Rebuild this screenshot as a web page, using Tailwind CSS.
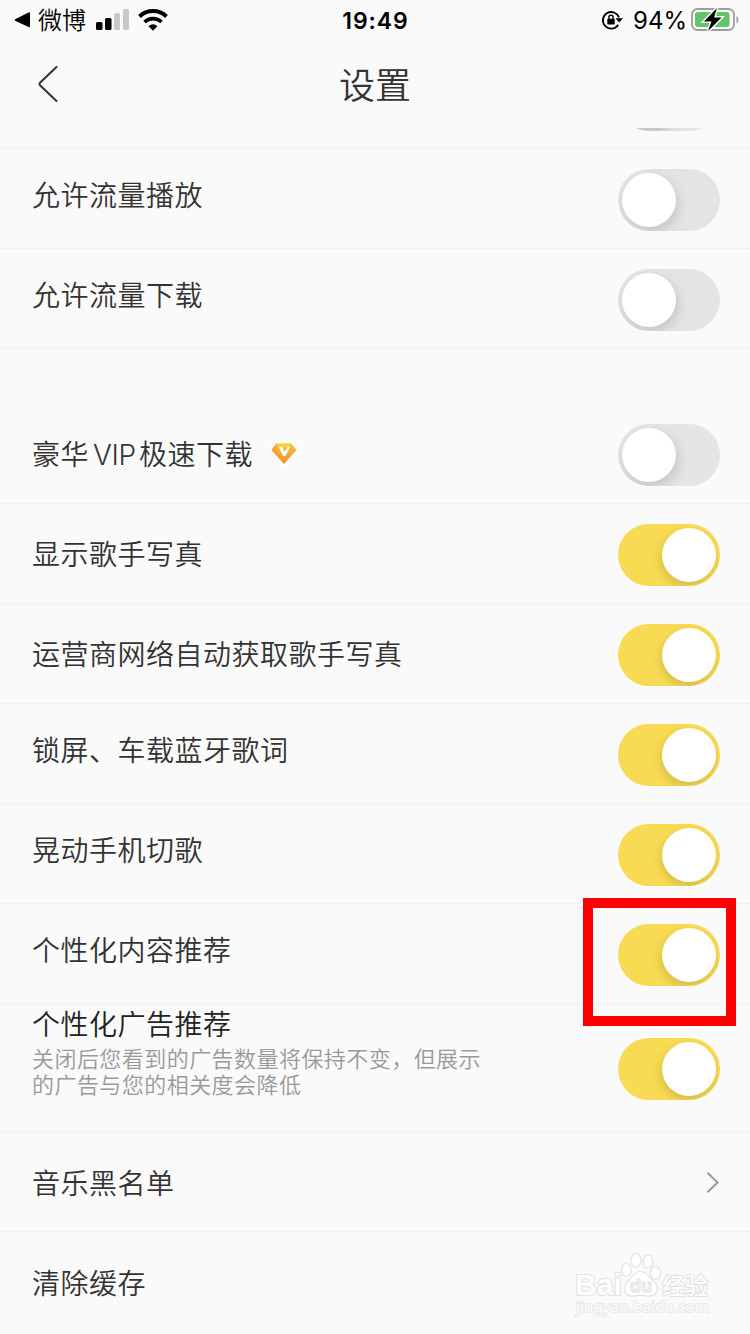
<!doctype html>
<html lang="zh-CN">
<head>
  <meta charset="UTF-8">
  <meta name="viewport" content="width=device-width, initial-scale=1.0">
  <title>设置</title>
  <script src="https://cdn.jsdelivr.net/npm/@tailwindcss/browser@4"></script>
  <style>
    body {
      font-family: Inter, 'Noto Sans CJK SC', sans-serif;
    }
  </style>
</head>
<body class="relative w-[750px] h-[1334px] overflow-hidden bg-[#fafafa] text-[#333]">
  <!-- status bar -->
  <div class="grid grid-cols-3 h-10 pl-[14px] pr-[11px] items-center text-black">
    <div class="flex items-center">
      <svg class="w-4 h-4" viewBox="0 0 16 16"><path d="M1.2 7.2 14.5.4Q16 0 16 1.5V14Q16 15.500 14.500 15L1.200 8.800Q0 8 1.200 7.200Z"/></svg>
      <span class="ml-2 pt-[2px] text-[24px] leading-[38px] font-[350]">微博</span>
      <svg class="ml-[10px] w-[34px] h-[22px]" viewBox="0 0 34 22">
        <rect x="0" y="13" width="6.500" height="8" rx="1.500"/>
        <rect x="9" y="9" width="6.500" height="12" rx="1.500"/>
        <rect x="18" y="4" width="6" height="17" rx="1.500" fill="#c8c8c8"/>
        <rect x="27" y="0" width="6" height="21" rx="1.500" fill="#c8c8c8"/>
      </svg>
      <svg class="ml-2 w-[30px] h-[22px]" viewBox="0 0 30 22">
        <path d="M1.500 7.500A19.500 19.500 0 0 1 28.500 7.500" fill="none" stroke="#000" stroke-width="4"/>
        <path d="M6.500 13A12.500 12.500 0 0 1 23.500 13" fill="none" stroke="#000" stroke-width="3.600"/>
        <path d="M10.500 17.200Q15 13.500 19.500 17.200L15 21.700Z"/>
      </svg>
    </div>
    <div class="pt-[2px] pr-[2px] text-center text-[23px] leading-[38px] font-semibold tracking-[0.9px]">19:49</div>
    <div class="flex items-center justify-end">
      <svg class="w-[22px] h-[20px]" viewBox="0 0 22 20">
        <path d="M18 7.500A8.300 8.300 0 1 0 17.200 14.800" fill="none" stroke="#000" stroke-width="1.800"/>
        <path d="M14.500 8.200H22L18.200 12.600Z"/>
        <rect x="6.300" y="8.800" width="7.400" height="5.700" rx="1"/>
        <path d="M7.900 9V7.300a2.100 2.100 0 0 1 4.200 0V9" fill="none" stroke="#000" stroke-width="1.400"/>
      </svg>
      <span class="ml-[10px] pt-[2px] text-[24px] leading-[38px]">94%</span>
      <svg class="ml-[4px] w-[48px] h-[24px]" viewBox="0 0 48 24">
        <rect x="1" y="1" width="42" height="21" rx="5.500" fill="none" stroke="#9d9d9d" stroke-width="1.800"/>
        <path d="M45.500 8v7.500q2-1 2-3.700t-2-3.800z" fill="#9d9d9d"/>
        <rect x="4" y="4" width="34.500" height="15" rx="3" fill="#65c466"/>
        <path d="M26 0 13 13.500h7.500L17 23 30.500 9.500H23Z" stroke="#fafafa" stroke-width="3" paint-order="stroke"/>
      </svg>
    </div>
  </div>

  <!-- nav bar -->
  <header class="grid grid-cols-3 items-center h-[88px] px-[38px]">
    <svg class="w-5 h-9" viewBox="0 0 20 36" fill="none" stroke="#333" stroke-width="2" stroke-linecap="round"><path d="M18.500 1 2 16.800Q1 18 2 19.200L18.500 35"/></svg>
    <h1 class="pt-1 text-center text-[36px] leading-[84px] font-[350]">设置</h1>
  </header>

  <main>
    <!-- row scrolled under the nav bar -->
    <div class="flex h-[21px] items-end justify-end overflow-hidden border-b border-[#f2f2f2] pr-[30px] pb-[17px]">
      <div class="h-[62px] w-[102px] shrink-0 overflow-hidden rounded-full bg-[#e4e4e4] p-1"><div class="size-[54px] rounded-full bg-white shadow-[2px_5px_12px_rgba(0,0,0,0.2)]"></div></div>
    </div>
    <div class="flex h-[100px] items-start justify-between border-b border-[#f2f2f2] pl-8 pr-[30px]">
      <p class="mt-[27px] text-[28px] leading-10 font-[350] tracking-[0.5px]">允许流量播放</p>
      <div class="mt-5 h-[62px] w-[102px] overflow-hidden rounded-full bg-[#e4e4e4] p-1"><div class="size-[54px] rounded-full bg-white shadow-[2px_5px_12px_rgba(0,0,0,0.14)]"></div></div>
    </div>
    <div class="flex h-[100px] items-start justify-between border-b border-[#f2f2f2] pl-8 pr-[30px]">
      <p class="mt-[27px] text-[28px] leading-10 font-[350] tracking-[0.5px]">允许流量下载</p>
      <div class="mt-5 h-[62px] w-[102px] overflow-hidden rounded-full bg-[#e4e4e4] p-1"><div class="size-[54px] rounded-full bg-white shadow-[2px_5px_12px_rgba(0,0,0,0.14)]"></div></div>
    </div>

    <div class="mt-[55px] flex h-[100px] items-start border-b border-[#f2f2f2] pl-8 pr-[30px]">
      <p class="mt-[31px] text-[28px] leading-10 font-[350] tracking-[0.5px]">豪华<span class="ml-[4px] mr-[3px] tracking-[-0.3px]">VIP</span>极速下载</p>
      <svg class="ml-[14px] mt-[35px] h-[30px] w-[34px]" viewBox="0 0 34 30">
        <defs>
          <linearGradient id="gem" x1="0" y1="0" x2="0" y2="1">
            <stop offset="0" stop-color="#f8c63f"/>
            <stop offset="1" stop-color="#ee8b35"/>
          </linearGradient>
        </defs>
        <path d="M8 1H26L33 10 17 29 1 10Z" fill="#fff"/>
        <path d="M9.500 4.500H24.500L29.500 11 17 25 4.500 11Z" fill="url(#gem)"/>
        <path d="M9.500 4.500 4.500 11 17 25 9.500 11Z" fill="#f6a13a"/>
        <path d="M9.500 4.500H24.500L22 8H12Z" fill="#fad24e"/>
        <path d="M12 8H15.500L17.500 13 20.500 8H23L18.500 17H16Z" fill="#fff"/>
      </svg>
      <div class="ml-auto mt-5 h-[62px] w-[102px] overflow-hidden rounded-full bg-[#e4e4e4] p-1"><div class="size-[54px] rounded-full bg-white shadow-[2px_5px_12px_rgba(0,0,0,0.14)]"></div></div>
    </div>
    <div class="flex h-[100px] items-start justify-between border-b border-[#f2f2f2] pl-8 pr-[30px]">
      <p class="mt-[31px] text-[28px] leading-10 font-[350] tracking-[0.5px]">显示歌手写真</p>
      <div class="mt-5 flex h-[62px] w-[102px] justify-end overflow-hidden rounded-full bg-[#f8db52] p-1"><div class="size-[54px] rounded-full bg-white shadow-[-1px_4px_10px_rgba(0,0,0,0.15)]"></div></div>
    </div>
    <div class="flex h-[100px] items-start justify-between border-b border-[#f2f2f2] pl-8 pr-[30px]">
      <p class="mt-[31px] text-[28px] leading-10 font-[350] tracking-[0.5px]">运营商网络自动获取歌手写真</p>
      <div class="mt-5 flex h-[62px] w-[102px] justify-end overflow-hidden rounded-full bg-[#f8db52] p-1"><div class="size-[54px] rounded-full bg-white shadow-[-1px_4px_10px_rgba(0,0,0,0.15)]"></div></div>
    </div>
    <div class="flex h-[100px] items-start justify-between border-b border-[#f2f2f2] pl-8 pr-[30px]">
      <p class="mt-[27px] text-[28px] leading-10 font-[350] tracking-[0.5px]">锁屏、车载蓝牙歌词</p>
      <div class="mt-5 flex h-[62px] w-[102px] justify-end overflow-hidden rounded-full bg-[#f8db52] p-1"><div class="size-[54px] rounded-full bg-white shadow-[-1px_4px_10px_rgba(0,0,0,0.15)]"></div></div>
    </div>
    <div class="flex h-[100px] items-start justify-between border-b border-[#f2f2f2] pl-8 pr-[30px]">
      <p class="mt-[27px] text-[28px] leading-10 font-[350] tracking-[0.5px]">晃动手机切歌</p>
      <div class="mt-5 flex h-[62px] w-[102px] justify-end overflow-hidden rounded-full bg-[#f8db52] p-1"><div class="size-[54px] rounded-full bg-white shadow-[-1px_4px_10px_rgba(0,0,0,0.15)]"></div></div>
    </div>
    <div class="relative flex h-[100px] items-start justify-between border-b border-[#f2f2f2] pl-8 pr-[30px]">
      <p class="mt-[27px] text-[28px] leading-10 font-[350] tracking-[0.5px]">个性化内容推荐</p>
      <div class="mt-5 flex h-[62px] w-[102px] justify-end overflow-hidden rounded-full bg-[#f8db52] p-1"><div class="size-[54px] rounded-full bg-white shadow-[-1px_4px_10px_rgba(0,0,0,0.15)]"></div></div>
      <!-- highlight frame -->
      <div class="absolute -top-[6px] right-[14px] h-[128px] w-[153px] border-10 border-[#ff0000]"></div>
    </div>
    <div class="flex h-[128px] items-start justify-between border-b border-[#f2f2f2] pl-8 pr-[30px]">
      <div>
        <p class="mt-px text-[28px] leading-10 font-[350] tracking-[0.5px] text-[#222]">个性化广告推荐</p>
        <p class="mt-px text-[22px] leading-[26px] font-[350] tracking-[0.45px] text-[#999]">关闭后您看到的广告数量将保持不变，但展示<br>的广告与您的相关度会降低</p>
      </div>
      <div class="mt-[34px] flex h-[62px] w-[102px] justify-end overflow-hidden rounded-full bg-[#f8db52] p-1"><div class="size-[54px] rounded-full bg-white shadow-[-1px_4px_10px_rgba(0,0,0,0.15)]"></div></div>
    </div>
    <div class="flex h-[100px] items-start justify-between border-b border-[#f2f2f2] pl-8 pr-[30px]">
      <p class="mt-8 text-[28px] leading-10 font-[350] tracking-[0.5px]">音乐黑名单</p>
      <svg class="mt-10 h-[21px] w-[14px]" viewBox="0 0 14 21" fill="none" stroke="#999" stroke-width="2"><path d="M1.500.8 11.500 10.500 1.500 20.200"/></svg>
    </div>
    <div class="flex h-[100px] items-start border-b border-[#f2f2f2] pl-8 pr-[30px]">
      <p class="mt-8 text-[28px] leading-10 font-[350] tracking-[0.5px]">清除缓存</p>
    </div>
  </main>

  <!-- watermark -->
  <svg class="absolute left-[570px] top-[1248px] h-[76px] w-[145px]" viewBox="0 0 145 76" fill="#fff" stroke="#e2e2e2" stroke-width="2" stroke-linejoin="round">
    <g stroke-width="1.200">
      <ellipse cx="56.500" cy="22" rx="5" ry="6.500"/>
      <ellipse cx="66" cy="12.500" rx="5" ry="7"/>
      <ellipse cx="78" cy="13.500" rx="5" ry="6.500"/>
      <ellipse cx="85.500" cy="25" rx="5" ry="6.500"/>
      <path d="M70.500 23.500C77 23.500 79 29 83 32.500C88 36.500 89 42 84.500 46.500C80 50 76 47 70.500 47.500C65 47 61 50 56.500 46.500C53 42 54 36.500 58.500 32.500C62.500 29 64.500 23.500 70.500 23.500Z"/>
    </g>
    <g paint-order="stroke">
      <text x="5" y="47" font-family="Liberation Sans" font-weight="700" font-size="29" textLength="47" lengthAdjust="spacingAndGlyphs">Bai</text>
      <text x="60" y="44" font-family="Liberation Sans" font-weight="700" font-size="19" fill="#ececec" stroke="#dcdcdc" stroke-width="1" textLength="22" lengthAdjust="spacingAndGlyphs">du</text>
      <text x="92" y="46" font-family="Noto Sans CJK SC" font-weight="500" font-size="23" textLength="46">经验</text>
      <text x="6" y="64" font-family="Noto Sans" font-size="15" stroke-width="1.500" textLength="133" lengthAdjust="spacingAndGlyphs">jingyan.baidu.com</text>
    </g>
  </svg>
</body>
</html>
